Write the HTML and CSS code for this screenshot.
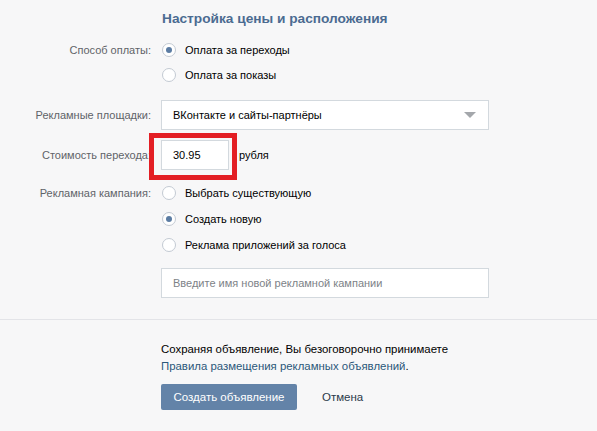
FILE: index.html
```html
<!DOCTYPE html>
<html lang="ru">
<head>
<meta charset="utf-8">
<link rel="stylesheet" href="styles.css">
</head>
<body>
<div class="page">
  <section class="settings">
    <h2 class="title">Настройка цены и расположения</h2>

    <div class="row row-radios">
      <div class="label">Способ оплаты:</div>
      <div class="field">
        <div class="radio checked"><span class="dot"></span><span>Оплата за переходы</span></div>
        <div class="radio"><span class="dot"></span><span>Оплата за показы</span></div>
      </div>
    </div>

    <div class="row row-select">
      <div class="label">Рекламные площадки:</div>
      <div class="field">
        <div class="select"><span>ВКонтакте и сайты-партнёры</span><span class="arrow"></span></div>
      </div>
    </div>

    <div class="row row-cost">
      <div class="label">Стоимость перехода:</div>
      <div class="field cost">
        <span class="highlight"><span class="input small">30.95</span></span>
        <span class="unit">рубля</span>
      </div>
    </div>

    <div class="row row-campaign">
      <div class="label">Рекламная кампания:</div>
      <div class="field">
        <div class="radio"><span class="dot"></span><span>Выбрать существующую</span></div>
        <div class="radio checked"><span class="dot"></span><span>Создать новую</span></div>
        <div class="radio"><span class="dot"></span><span>Реклама приложений за голоса</span></div>
        <div class="input wide placeholder">Введите имя новой рекламной кампании</div>
      </div>
    </div>
  </section>

  <footer class="footer">
    <p class="terms">Сохраняя объявление, Вы безоговорочно принимаете<br><a class="link" href="#">Правила размещения рекламных объявлений</a>.</p>
    <div class="actions">
      <button class="btn">Создать объявление</button>
      <a class="cancel" href="#">Отмена</a>
    </div>
  </footer>
</div>
</body>
</html>
```
FILE: styles.css
```css
html, body {
  margin: 0;
  padding: 0;
  background: #f7f7f8;
}
body {
  font-family: Tahoma, "Liberation Sans", Arial, sans-serif;
  font-size: 11px;
  color: #000;
  width: 597px;
  height: 431px;
  overflow: hidden;
}
.settings {
  padding: 11px 0 0 0;
}
.title {
  margin: 0 0 0 162px;
  font-size: 13.7px;
  font-weight: bold;
  color: #4b6b91;
  line-height: 16px;
  height: 16px;
}
.row {
  display: grid;
  grid-template-columns: 151px 328px;
  column-gap: 10px;
}
.label {
  text-align: right;
  color: #5f6368;
  line-height: 16px;
}
.row-radios {
  margin-top: 15px;
}
.radio {
  display: flex;
  align-items: center;
  gap: 9px;
  height: 16px;
  line-height: 16px;
  margin-bottom: 9px;
}
.row-campaign .radio {
  margin-bottom: 10px;
}
.dot {
  box-sizing: border-box;
  width: 14px;
  height: 14px;
  border: 1px solid #c3cad3;
  border-radius: 50%;
  background: #fff;
  display: flex;
  align-items: center;
  justify-content: center;
  margin-left: 1px;
}
.checked .dot::after {
  content: "";
  width: 6px;
  height: 6px;
  border-radius: 50%;
  background: #5b7ca3;
}
.row-select {
  margin-top: 8px;
}
.row-select .label {
  line-height: 30px;
}
.select {
  box-sizing: border-box;
  height: 30px;
  width: 328px;
  border: 1px solid #d3d9de;
  background: #fff;
  display: flex;
  align-items: center;
  justify-content: space-between;
  padding: 0 11px 0 11px;
}
.arrow {
  width: 0;
  height: 0;
  border-left: 6px solid transparent;
  border-right: 6px solid transparent;
  border-top: 6px solid #a4a7ab;
  margin-right: 1px;
}
.row-cost {
  margin-top: 10px;
}
.row-cost .label {
  line-height: 30px;
}
.cost {
  display: flex;
  align-items: center;
  gap: 10px;
}
.highlight {
  position: relative;
  display: block;
}
.highlight::before {
  content: "";
  position: absolute;
  left: -12px;
  right: -8px;
  top: -7px;
  bottom: -10px;
  border: 5px solid #e31e24;
}
.input {
  box-sizing: border-box;
  height: 30px;
  border: 1px solid #d3d9de;
  background: #fff;
  display: flex;
  align-items: center;
  padding: 0 11px;
}
.input.small {
  width: 68px;
}
.unit {
  line-height: 30px;
}
.row-campaign {
  margin-top: 15px;
}
.input.wide {
  width: 328px;
  margin-top: 15px;
}
.placeholder {
  color: #7d8287;
}
.footer {
  margin-top: 21px;
  border-top: 1px solid #e3e4e8;
  padding: 21px 0 0 161px;
}
.terms {
  margin: 0;
  line-height: 17px;
  font-size: 11.4px;
  color: #000;
}
.link {
  color: #2b587a;
  text-decoration: none;
}
.actions {
  display: flex;
  align-items: center;
  margin-top: 9px;
}
.btn {
  width: 136px;
  height: 26px;
  border: 0;
  border-radius: 2px;
  background: #6383a8;
  color: #fff;
  font-family: inherit;
  font-size: 11.5px;
  padding: 0;
}
.cancel {
  margin-left: 25px;
  color: #2b3a4a;
  text-decoration: none;
  font-size: 11.5px;
}
```
